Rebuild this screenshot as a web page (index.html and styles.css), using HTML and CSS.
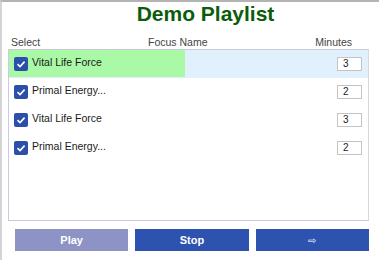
FILE: index.html
```html
<!DOCTYPE html>
<html>
<head>
<meta charset="utf-8">
<link rel="stylesheet" href="styles.css">
</head>
<body>
<div class="frame">
  <h1 class="title">Demo Playlist</h1>
  <div class="heads">
    <span class="h-sel">Select</span>
    <span class="h-name">Focus Name</span>
    <span class="h-min">Minutes</span>
  </div>
  <div class="list">
    <div class="row active">
      <div class="progress" style="width:49%"></div>
      <span class="cb"><svg viewBox="0 0 14 14" width="14" height="14"><path d="M3.5 7.2 L6 9.6 L10.6 4.6" fill="none" stroke="#fff" stroke-width="1.6"/></svg></span>
      <span class="name">Vital Life Force</span>
      <span class="min">3</span>
    </div>
    <div class="row">
      <span class="cb"><svg viewBox="0 0 14 14" width="14" height="14"><path d="M3.5 7.2 L6 9.6 L10.6 4.6" fill="none" stroke="#fff" stroke-width="1.6"/></svg></span>
      <span class="name">Primal Energy...</span>
      <span class="min">2</span>
    </div>
    <div class="row">
      <span class="cb"><svg viewBox="0 0 14 14" width="14" height="14"><path d="M3.5 7.2 L6 9.6 L10.6 4.6" fill="none" stroke="#fff" stroke-width="1.6"/></svg></span>
      <span class="name">Vital Life Force</span>
      <span class="min">3</span>
    </div>
    <div class="row">
      <span class="cb"><svg viewBox="0 0 14 14" width="14" height="14"><path d="M3.5 7.2 L6 9.6 L10.6 4.6" fill="none" stroke="#fff" stroke-width="1.6"/></svg></span>
      <span class="name">Primal Energy...</span>
      <span class="min">2</span>
    </div>
  </div>
  <div class="buttons">
    <button class="btn play">Play</button>
    <button class="btn">Stop</button>
    <button class="btn arrow">⇨</button>
  </div>
</div>
</body>
</html>
```
FILE: styles.css
```css
html, body { margin: 0; padding: 0; background: #fff; }
body { font-family: "Liberation Sans", Arial, sans-serif; }
.frame {
  width: 379px; height: 260px; box-sizing: border-box;
  border-top: 2px solid #b4b4b4; border-left: 2px solid #d4d4d4;
  padding: 0 10px 0 6px;
}
.title {
  margin: 0; text-align: center; font-size: 21px; font-weight: bold;
  color: #0b5c0b; line-height: 24px; padding-left: 34px;
}
.heads {
  display: grid; grid-template-columns: 137px auto 1fr;
  font-size: 10.5px; color: #444; line-height: 14px; padding: 9px 17px 0 3px;
}
.h-min { text-align: right; }
.list {
  height: 172px; box-sizing: border-box; border: 1px solid #c9cbdc;
  border-right-color: #d7d7e6;
}
.row {
  position: relative; display: flex; align-items: flex-start; height: 28px;
  box-sizing: border-box; padding: 7px 6px 0 5px; font-size: 10.5px; color: #1a1a1a;
}
.row.active { background: #e1f0fd; }
.progress { position: absolute; left: 0; top: 0; bottom: 1px; background: #a9f9a6; }
.cb {
  position: relative; width: 14px; height: 14px; background: #2c4fab;
  border-radius: 2px; display: flex;
}
.name { position: relative; margin-left: 4px; flex: 1; line-height: 12px; margin-top: -1px; }
.min {
  position: relative; width: 25px; height: 14px; box-sizing: border-box;
  border: 1px solid #c4c4c4; background: #fff; font-size: 10px; line-height: 12px;
  padding-left: 5px; color: #222;
}
.buttons {
  display: grid; grid-template-columns: 1fr 1fr 1fr; gap: 7px;
  padding: 8px 0 0 7px;
}
.btn {
  height: 22px; border: none; background: #2d52b0; color: #fff;
  font-family: inherit; font-size: 11px; font-weight: bold; padding: 0;
}
.btn.play { background: #8d93c4; }
.btn.arrow { font-weight: normal; font-size: 10px; }
```
